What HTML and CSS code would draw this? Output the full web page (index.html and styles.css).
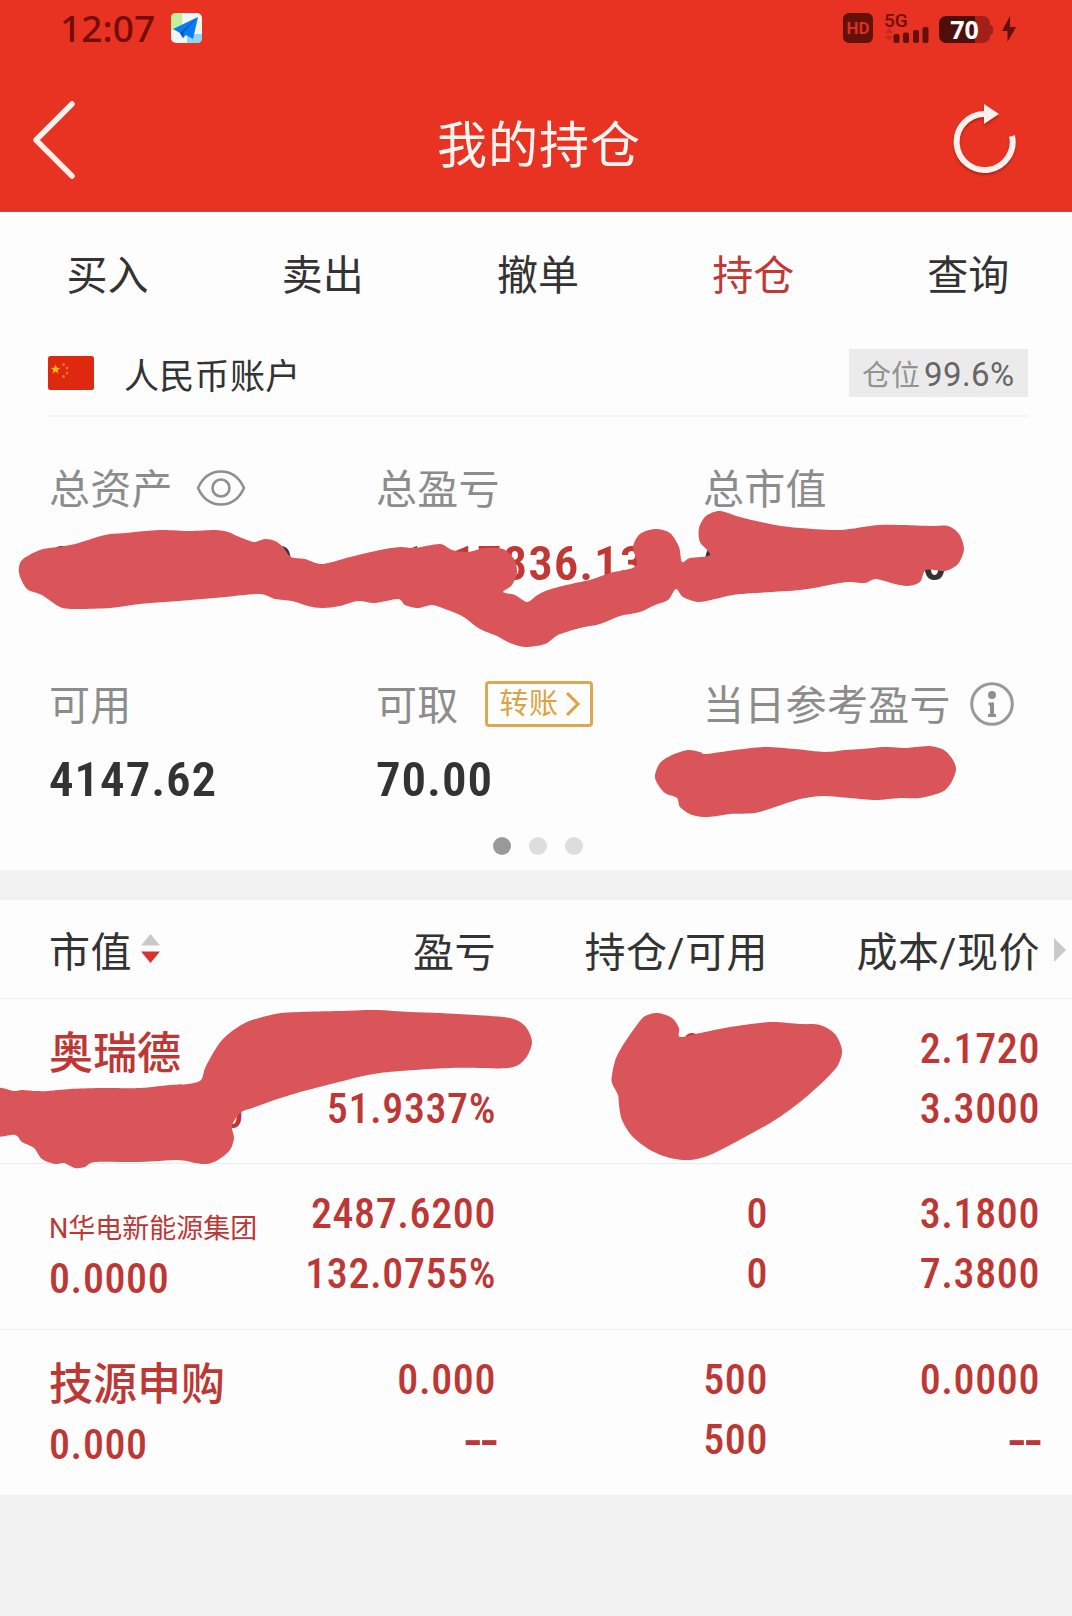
FILE: index.html
```html
<!DOCTYPE html>
<html lang="zh-CN">
<head>
    <meta charset="UTF-8">
    <meta name="viewport" content="width=device-width, initial-scale=1.0">
    <title>我的持仓</title>
    <link rel="stylesheet" href="styles.css">
</head>
<body>
    <header class="header">
        <div class="status-bar">
            <span class="clock">12:07</span>
            <svg class="app-icon" width="31" height="30" viewBox="0 0 31 30">
                <rect width="31" height="30" rx="5" fill="#f1f5f3"/>
                <path d="M5 0h6v13L0 18V5q0-5 5-5z" fill="#c3ee9b"/>
                <path d="M16 21h15v4q0 5-5 5H16z" fill="#8fd5f5"/>
                <path d="M27 4L2 16l7 4 3 5 3-3 7 4z" fill="#0b7cf0"/>
                <path d="M27 4L9 20l3 5 1-6z" fill="#0558c4"/>
            </svg>
            <div class="status-right">
                <span class="hd">HD</span>
                <div class="signal">
                    <span class="net">5G</span>
                    <svg width="46" height="16" viewBox="0 0 46 16">
                        <path d="M1 6l4-5 4 5zM1 9h8l-4 5z" fill="#c92a1c"/>
                        <rect x="9.500" y="7" width="6" height="9" rx="2"/>
                        <rect x="19" y="5.500" width="6" height="10.500" rx="2"/>
                        <rect x="29" y="3" width="6" height="13" rx="2"/>
                        <rect x="38.500" y="0" width="6" height="16" rx="2"/>
                    </svg>
                </div>
                <div class="battery">70</div>
                <svg class="bolt" width="14" height="26" viewBox="0 0 14 26"><path d="M8 0L0 15h5.500L5.500 26 14 11H8z"/></svg>
            </div>
        </div>
        <div class="title-bar">
            <svg class="back" width="50" height="84" viewBox="0 0 50 84">
                <path d="M42 6L6 42l36 36" fill="none" stroke="#fff0ee" stroke-width="5.500" stroke-linecap="round" stroke-linejoin="round"/>
            </svg>
            <h1>我的持仓</h1>
            <svg class="refresh" width="64" height="74" viewBox="0 0 64 74">
                <path d="M32 13a28 28 0 1 0 28 22" fill="none" stroke="#fff0ee" stroke-width="6"/>
                <path d="M32 3l15 10-15 10z" fill="#fff0ee"/>
            </svg>
        </div>
    </header>

    <nav class="tabs">
        <a>买入</a>
        <a>卖出</a>
        <a>撤单</a>
        <a class="active">持仓</a>
        <a>查询</a>
    </nav>

    <section class="account">
        <div class="account-head">
            <svg class="flag" width="46" height="34" viewBox="0 0 46 34">
                <rect width="46" height="34" rx="2.500" fill="#de2910"/>
                <path d="M7.500 8.500l1.300 3.200 3.400.2-2.600 2.200.8 3.300-2.900-1.800-2.900 1.800.8-3.300-2.600-2.200 3.400-.2z" fill="#fcb912"/>
                <g fill="#f0731a">
                    <circle cx="15.500" cy="8.500" r="1.500"/>
                    <circle cx="19" cy="12" r="1.500"/>
                    <circle cx="19" cy="17" r="1.500"/>
                    <circle cx="15.500" cy="20.500" r="1.500"/>
                </g>
            </svg>
            <span class="account-name">人民币账户</span>
            <span class="position">仓位<b>99.6%</b></span>
        </div>
        <div class="assets">
            <div class="asset">
                <div class="label">总资产
                    <svg class="eye" width="50" height="36" viewBox="0 0 50 36" fill="none" stroke="#8f8f8f" stroke-width="2.600">
                        <path d="M2 18C7 7 15 1.500 25 1.500S43 7 48 18c-5 11-13 16.500-23 16.500S7 29 2 18z" stroke-linejoin="round"/>
                        <circle cx="25" cy="18" r="8.500"/>
                    </svg>
                </div>
                <div class="value">0000000.00</div>
            </div>
            <div class="asset">
                <div class="label">总盈亏</div>
                <div class="value red">+1117836.13</div>
            </div>
            <div class="asset">
                <div class="label">总市值</div>
                <div class="value">0000000.00</div>
            </div>
            <div class="asset">
                <div class="label">可用</div>
                <div class="value">4147.62</div>
            </div>
            <div class="asset">
                <div class="label">可取
                    <span class="transfer">转账
                        <svg width="16" height="26" viewBox="0 0 16 26"><path d="M2 2l11 11L2 24" fill="none" stroke="#dba343" stroke-width="3"/></svg>
                    </span>
                </div>
                <div class="value">70.00</div>
            </div>
            <div class="asset">
                <div class="label">当日参考盈亏
                    <svg class="info" width="44" height="44" viewBox="0 0 44 44">
                        <circle cx="22" cy="22" r="20.300" fill="none" stroke="#999" stroke-width="3"/>
                        <circle cx="22" cy="13" r="4" fill="#8f8f8f"/>
                        <path d="M18.500 20.500H24V32h2v3h-8v-3h2v-8.500h-1.500z" fill="#8f8f8f"/>
                    </svg>
                </div>
                <div class="value">0.00</div>
            </div>
        </div>
        <div class="dots"><i class="on"></i><i></i><i></i></div>
    </section>

    <section class="holdings">
        <div class="row head">
            <div class="name">市值
                <svg class="sort" width="19" height="29" viewBox="0 0 19 29">
                    <path d="M9.500 0L19 11.500H0z" fill="#c9c9c9"/>
                    <path d="M9.500 29L0 17.500h19z" fill="#dc3030"/>
                </svg>
            </div>
            <div>盈亏</div>
            <div>持仓/可用</div>
            <div>成本/现价</div>
            <svg class="more" width="12" height="24" viewBox="0 0 12 24"><path d="M0 0l12 12L0 24z" fill="#c9c9c9"/></svg>
        </div>
        <div class="row">
            <div class="name"><p class="stock">奥瑞德</p><p>0,000.0000</p></div>
            <div><p>0000.00</p><p>51.9337%</p></div>
            <div><p>0000</p><p>0000</p></div>
            <div><p>2.1720</p><p>3.3000</p></div>
        </div>
        <div class="row">
            <div class="name"><p class="stock small">N华电新能源集团</p><p>0.0000</p></div>
            <div><p>2487.6200</p><p>132.0755%</p></div>
            <div><p>0</p><p>0</p></div>
            <div><p>3.1800</p><p>7.3800</p></div>
        </div>
        <div class="row">
            <div class="name"><p class="stock">技源申购</p><p>0.000</p></div>
            <div><p>0.000</p><p class="none">--</p></div>
            <div><p>500</p><p>500</p></div>
            <div><p>0.0000</p><p class="none">--</p></div>
        </div>
    </section>

    <svg class="marker" id="marker" width="1072" height="1616" viewBox="0 0 1072 1616"></svg>
    <script src="marker.js"></script>
</body>
</html>
```
FILE: styles.css
```css
* {
    box-sizing: border-box;
}
body {
    position: relative;
    width: 1072px;
    height: 1616px;
    margin: 0;
    overflow: hidden;
    background: #f2f2f2;
    color: #333;
    font-family: Roboto, "Noto Sans CJK SC", sans-serif;
}
p, h1 {
    margin: 0;
}
svg {
    display: block;
    flex-shrink: 0;
}
.header {
    height: 212px;
    background: #e83323;
    border-bottom: 1px solid #c24a3e;
}
.status-bar {
    display: flex;
    align-items: center;
    height: 56px;
    padding: 0 56px 0 60px;
    color: #750d06;
}
.clock {
    width: 111px;
    font: 500 37px/56px "Noto Sans", sans-serif;
    letter-spacing: 0.1px;
}
.status-right {
    display: flex;
    align-items: center;
    margin-left: auto;
    fill: #64100b;
}
.hd {
    width: 30px;
    height: 30px;
    border-radius: 6px;
    background: #64100b;
    color: #d93025;
    font: bold 17px/30px Roboto, sans-serif;
    text-align: center;
}
.signal {
    width: 46px;
    height: 30px;
    margin-left: 11px;
}
.net {
    display: block;
    height: 14px;
    font: 500 19px/15px Roboto, sans-serif;
}
.battery {
    position: relative;
    width: 51px;
    height: 27px;
    margin: 3px 0 0 9px;
    border-radius: 7px;
    background: linear-gradient(90deg, #4e0f0b 70%, #a3201a 70%);
    color: #fff;
    font: bold 25px/26px "Noto Sans", sans-serif;
    text-align: center;
}
.battery::after {
    content: "";
    position: absolute;
    top: 9px;
    right: -3px;
    width: 3px;
    height: 10px;
    border-radius: 0 3px 3px 0;
    background: #a3201a;
}
.bolt {
    margin: 2px 0 0 12px;
}
.title-bar {
    display: grid;
    grid-template-columns: 50px 1fr 64px;
    align-items: center;
    height: 168px;
    padding: 0 56px 0 30px;
}
h1 {
    padding: 1px 0 0 46px;
    color: #fff5f3;
    font-size: 50px;
    font-weight: 400;
    letter-spacing: 1px;
    text-align: center;
}
.refresh {
    margin-bottom: 4px;
    filter: drop-shadow(0 2px 1px rgba(120, 20, 10, 0.5));
}
.tabs {
    display: grid;
    grid-template-columns: repeat(5, 215.200px);
    height: 118px;
    background: #fdfdfd;
    font-size: 41px;
    line-height: 128px;
    text-align: center;
}
.tabs .active {
    color: #c23835;
}
.account {
    height: 540px;
    background: #fdfdfd;
}
.account-head {
    display: flex;
    align-items: center;
    height: 87px;
    margin: 0 44px 0 48px;
    border-bottom: 2px solid #f3f3f3;
}
.account-name {
    margin: 1px 0 0 30px;
    font-size: 35px;
    letter-spacing: 0.3px;
}
.position {
    display: flex;
    align-items: center;
    width: 179px;
    height: 48px;
    margin: 1px 0 0 auto;
    padding-left: 13px;
    background: #ebebeb;
    color: #929292;
    font-size: 29px;
}
.position b {
    padding-top: 3px;
    margin-left: 4px;
    color: #666;
    font-size: 33px;
    font-weight: 400;
    letter-spacing: 0.4px;
}
.assets {
    display: grid;
    grid-template-columns: 327px 327px 1fr;
    grid-template-rows: 216px 180px;
    padding: 36px 0 0 49px;
}
.label {
    display: flex;
    align-items: center;
    height: 72px;
    color: #8c8c8c;
    font-size: 41px;
    letter-spacing: 0.3px;
    line-height: 68px;
    padding-top: 2px;
    white-space: nowrap;
}
.value {
    height: 76px;
    font-size: 49px;
    font-weight: 600;
    font-stretch: 75%;
    letter-spacing: 0.9px;
    line-height: 77px;
}
.red {
    color: #c23835;
}
.eye {
    margin: -4px 0 0 23px;
}
.transfer {
    display: flex;
    align-items: center;
    justify-content: space-between;
    width: 108px;
    height: 46px;
    margin: -5px 0 0 26px;
    padding: 0 9px 0 12px;
    border: 3px solid #dba94f;
    border-radius: 4px;
    color: #dba343;
    font-size: 29px;
}
.info {
    margin: -5px 0 0 19px;
}
.dots {
    display: flex;
    justify-content: center;
    gap: 18px;
    margin-top: -12px;
    padding-left: 4px;
}
.dots i {
    width: 18px;
    height: 18px;
    border-radius: 50%;
    background: #ddd;
}
.dots .on {
    background: #999;
}
.holdings {
    margin-top: 30px;
    background: #fdfdfd;
    color: #bd3835;
}
.row {
    display: grid;
    grid-template-columns: 1fr 200px 272px 272px;
    height: 165.300px;
    padding: 20px 32px 0 49px;
    border-bottom: 1px solid #ececec;
    font-size: 42px;
    font-weight: 500;
    font-stretch: 75%;
    letter-spacing: 0.6px;
    line-height: 60px;
    text-align: right;
}
.row:last-child {
    border-bottom: none;
}
.row .name {
    padding-top: 5px;
    text-align: left;
    white-space: nowrap;
}
.row .stock {
    height: 60px;
    font-size: 44px;
    letter-spacing: 0;
}
.row .small {
    font-size: 27px;
    font-stretch: 100%;
    font-weight: 400;
    line-height: 80px;
}
.row .none {
    font-family: "DejaVu Sans", sans-serif;
    font-size: 60px;
    font-weight: 400;
    letter-spacing: -3px;
    line-height: 56px;
}
.head {
    position: relative;
    align-items: center;
    height: 99px;
    padding-top: 7px;
    color: #333;
    font-size: 41px;
    font-stretch: 100%;
    font-weight: 400;
    letter-spacing: 0.5px;
}
.head .name {
    display: flex;
    align-items: center;
    padding: 0;
}
.sort {
    margin: -9px 0 0 9px;
}
.more {
    position: absolute;
    top: 38px;
    right: 6px;
}
.marker {
    position: absolute;
    top: 0;
    left: 0;
    fill: #d9555a;
}
```
FILE: marker.js
```js
// outlines of the marker strokes that hide the amounts
const strokes = [
    '19,573 22,560 40,550 58,547 75,544 105,535 125,533 160,530 190,531 215,530 228,532 237,536 250,541 255,542 265,539 275,541 283,547 291,557 305,559 322,564 350,557 380,550 400,547 415,548 440,544 452,550 468,552 485,548 503,549 514,559 517,572 512,585 503,592 515,595 527,602 536,596 548,590 575,583 590,580 610,573 636,566 633,547 640,534 655,529 670,533 679,547 682,562 690,558 710,555 700,542 699,528 706,516 720,511 740,517 775,525 800,528 840,530 880,525 930,526 948,526 959,534 964,549 958,564 945,571 926,570 920,582 908,586 895,584 876,579 865,583 850,582 840,583 800,590 740,594 715,599 698,602 683,597 676,589 668,600 655,605 640,612 620,616 600,624 580,628 558,635 545,644 525,647 510,643 497,636 480,629 462,616 445,609 432,605 418,608 405,605 398,599 375,603 358,601 340,606 322,608 308,606 292,601 275,599 260,594 225,597 190,600 140,604 110,608 75,609 60,607 42,595 27,589',
    '655,775 660,763 672,755 688,750 700,752 706,754 735,750 765,747 795,749 825,752 845,750 862,749 885,747 905,748 916,747 930,746 944,750 953,760 956,770 951,783 942,792 920,798 900,798 876,800 850,798 823,796 800,799 775,807 755,813 730,814 708,817 692,815 680,807 677,798 665,793 657,783',
    '-8,1090 15,1091 22,1090 35,1091 48,1091 70,1089 100,1088 140,1088 170,1085 188,1084 201,1080 206,1066 222,1040 245,1023 275,1014 300,1012 340,1011 375,1010 410,1012 440,1013 475,1015 510,1018 525,1026 532,1042 525,1059 508,1068 450,1068 380,1073 335,1083 290,1095 255,1107 240,1113 232,1126 234,1138 230,1150 218,1160 207,1164 195,1163 178,1160 140,1162 95,1162 85,1167 75,1168 64,1163 55,1164 42,1159 34,1148 22,1142 15,1135 -8,1134',
    '612,1075 616,1058 625,1042 637,1025 645,1016 658,1013 672,1018 679,1028 680,1037 700,1033 730,1027 770,1022 800,1024 820,1025 835,1034 842,1050 838,1065 825,1080 800,1102 775,1120 745,1137 710,1155 690,1160 670,1158 650,1150 632,1136 622,1120 619,1105 618,1095 612,1083'
];

// closed smooth curve through all the points
function toPath(str) {
    const p = str.split(' ').map(s => s.split(',').map(Number));
    const n = p.length;
    let d = 'M' + p[0];
    for (let i = 0; i < n; i++) {
        const a = p[(i + n - 1) % n], b = p[i], c = p[(i + 1) % n], e = p[(i + 2) % n];
        d += 'C' + [
            b[0] + (c[0] - a[0]) / 7, b[1] + (c[1] - a[1]) / 7,
            c[0] - (e[0] - b[0]) / 7, c[1] - (e[1] - b[1]) / 7,
            c[0], c[1]
        ].join(' ');
    }
    return d + 'Z';
}

document.getElementById('marker').innerHTML = strokes.map(s => `<path d="${toPath(s)}"/>`).join('');
```
